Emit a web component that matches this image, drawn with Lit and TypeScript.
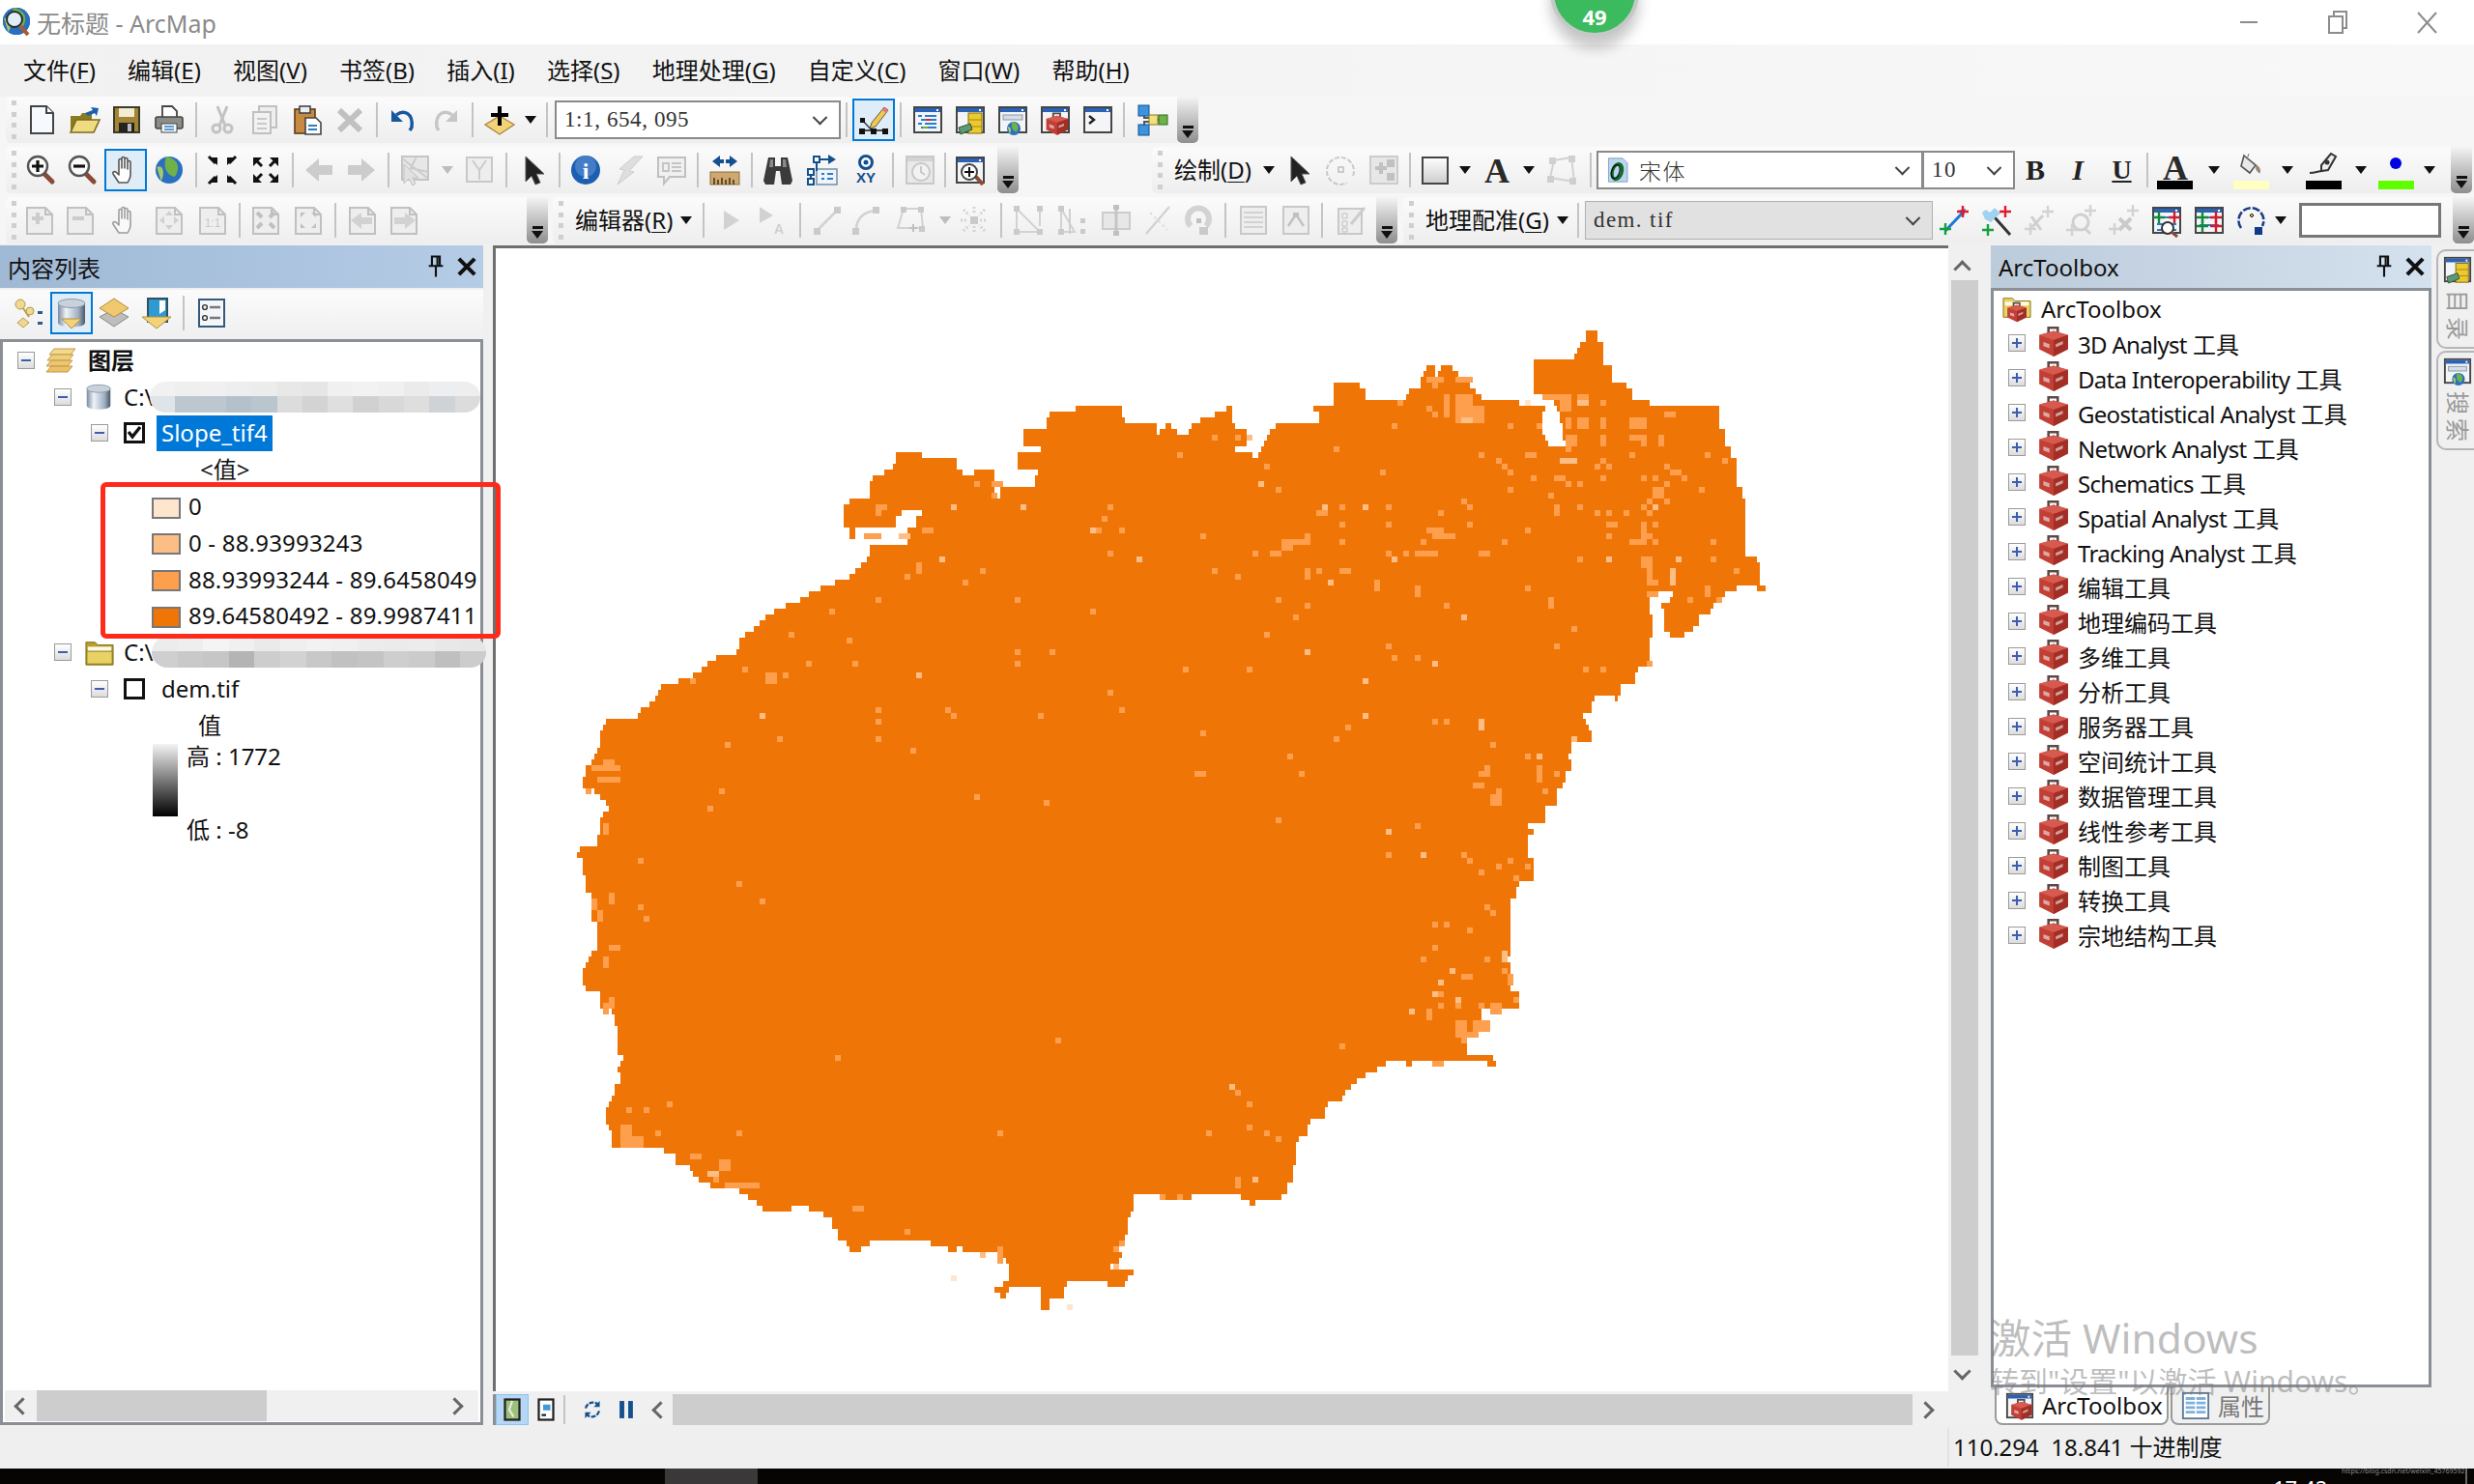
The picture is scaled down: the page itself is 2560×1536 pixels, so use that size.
import { LitElement, html, css, svg, nothing } from "lit";
import { customElement } from "lit/decorators.js";

// ---- icons (32 x 32 box) ----
const win = (inner: unknown) => svg`<rect x="2" y="3" width="28" height="26" fill="#f3f5f7" stroke="#454545" stroke-width="2"/><rect x="3" y="4" width="26" height="4" fill="#2a62b6"/><rect x="25" y="5" width="2" height="2" fill="#fff"/>${inner}`;
const redbox = (x = 0, y = 0, s = 1) => svg`<g transform="translate(${x} ${y}) scale(${s})"><path d="M11 8V3h9v5" fill="none" stroke="#5a4a48" stroke-width="2.4"/><path d="M2 10l14-4 14 4v14l-14 7-14-7z" fill="#c23f35"/><path d="M2 10l14-4 14 4-14 5z" fill="#d65a4f"/><path d="M16 15l14-5v14l-14 7z" fill="#a32e26"/><path d="M6 17l6 2v4l-6-2zM18 19l7-3v3l-7 3z" fill="#eee" opacity=".6"/></g>`;
const glob = (cx: number, cy: number, r: number) => svg`<circle cx=${cx} cy=${cy} r=${r} fill="#2a6fc0"/><path d="M${cx - r * 0.2} ${cy - r}c${r} ${r * 0.2} ${r} ${r} ${r * 0.6} ${r * 1.5}c-${r * 0.6} -${r * 0.1} -${r * 0.9} -${r * 0.8} -${r * 0.6} -${r * 1.5}z" fill="#6fb24a"/><path d="M${cx - r * 0.9} ${cy - r * 0.2}c${r * 0.5} -${r * 0.3} ${r * 0.6} ${r * 0.6} ${r * 0.3} ${r}z" fill="#a5c96a"/>`;
const lens = (sign: string) => svg`<path d="M19 19l9 9" stroke="#8a4a38" stroke-width="5" stroke-linecap="round"/><circle cx="13" cy="12" r="10" fill="#fbfbfb" stroke="#555" stroke-width="2.4"/><path d=${sign} stroke="#111" stroke-width="3.2"/>`;
const fourIn = svg`<path d="M3 3l8 0 0 8zM29 3l-8 0 0 8zM3 29l8 0 0-8zM29 29l-8 0 0-8z" fill="#111"/><path d="M2 2l7 7M30 2l-7 7M2 30l7-7M30 30l-7-7" stroke="#111" stroke-width="3"/>`;
const fourOut = svg`<path d="M3 3h9l-9 9zM29 3h-9l9 9zM3 29h9l-9-9zM29 29h-9l9-9z" fill="#111"/><path d="M5 5l7 7M27 5l-7 7M5 27l7-7M27 27l-7-7" stroke="#111" stroke-width="3"/>`;
const gdoc = (inner: unknown = nothing) => svg`<path d="M3 3h19l7 7v20H3z" fill="#eee" stroke="#bbb" stroke-width="2"/><path d="M22 3v7h7" fill="none" stroke="#bbb" stroke-width="2"/>${inner}`;
const hand = svg`<path d="M9 29l-6-9c-1-2 1-3 3-2l3 3V6c0-2 3-2 3 0v8V4c0-2 3-2 3 0v10V5c0-2 3-2 3 0v10V8c0-2 3-2 3 0v13c0 4-2 6-3 8z" fill="#fff" stroke="#555" stroke-width="1.6" stroke-linejoin="round"/>`;
const pointer = svg`<path d="M8 2v26l6-6 4 9 5-2-4-9h8z" fill="#222" stroke="#555"/>`;
const cross = (x: number, y: number, c: string) => svg`<path d="M${x - 6} ${y}h12M${x} ${y - 6}v12" stroke=${c} stroke-width="2.4"/>`;

const ICONS: Record<string, unknown> = {
  new: svg`<path d="M5 2h16l7 7v21H5z" fill="#f6f9fd" stroke="#444" stroke-width="2"/><path d="M21 2v7h7" fill="#fff" stroke="#444" stroke-width="2"/>`,
  open: svg`<path d="M2 12h10l2-3h10v19H2z" fill="#8a7a20"/><path d="M2 29l6-13h24l-6 13z" fill="#f0dc80" stroke="#7b6a1a" stroke-width="1.6"/><path d="M17 9l8-3-2-3 8 1-2 8-2-3-7 3z" fill="#1c5fa8"/>`,
  save: svg`<rect x="3" y="3" width="26" height="26" fill="#a48432" stroke="#3a3a2a" stroke-width="2"/><rect x="8" y="4" width="16" height="9" fill="#f1ecd4"/><rect x="8" y="19" width="16" height="10" fill="#222"/><rect x="17" y="20" width="4" height="8" fill="#bbb"/>`,
  print: svg`<path d="M9 14V2h10l5 5v7z" fill="#fff" stroke="#444" stroke-width="1.8"/><rect x="2" y="13" width="28" height="12" rx="2" fill="#8d8d88" stroke="#444" stroke-width="1.6"/><rect x="8" y="20" width="16" height="9" fill="#f4f8fb" stroke="#444"/><path d="M11 23h10M11 26h10" stroke="#2c7cc5" stroke-width="1.6"/>`,
  cut: svg`<path d="M11 2l8 20M21 2l-8 20" stroke="#bdbdbd" stroke-width="3"/><circle cx="10" cy="25" r="4" fill="none" stroke="#bdbdbd" stroke-width="3"/><circle cx="22" cy="25" r="4" fill="none" stroke="#bdbdbd" stroke-width="3"/>`,
  copy: svg`<rect x="10" y="2" width="18" height="22" fill="#eee" stroke="#bbb" stroke-width="2"/><rect x="4" y="8" width="18" height="22" fill="#f2f2f2" stroke="#bbb" stroke-width="2"/><path d="M8 15h10M8 20h10M8 25h10" stroke="#c4c4c4" stroke-width="2"/>`,
  paste: svg`<rect x="3" y="5" width="21" height="25" fill="#c78a43" stroke="#5b3b1c" stroke-width="1.6"/><rect x="8" y="2" width="11" height="7" fill="#eee" stroke="#444" stroke-width="1.6"/><path d="M14 14h11l5 5v12H14z" fill="#fff" stroke="#444" stroke-width="1.6"/><path d="M17 22h9M17 26h9" stroke="#2c7cc5" stroke-width="2"/>`,
  del: svg`<path d="M5 6l22 21M27 6L5 27" stroke="#bcbcbc" stroke-width="6"/>`,
  undo: svg`<path d="M9 11c8-6 18-2 16 13l-2 3" fill="none" stroke="#16569e" stroke-width="3.4"/><path d="M4 6v12h12z" fill="#16569e"/>`,
  redo: svg`<path d="M23 11C15 5 5 9 7 24l2 3" fill="none" stroke="#c6c6c6" stroke-width="3.4"/><path d="M28 6v12H16z" fill="#c6c6c6"/>`,
  add: svg`<path d="M16 12l15 9-15 10L1 21z" fill="#f3d27a" stroke="#a88a40" stroke-width="1.4"/><path d="M16 2v20M7 11h18" stroke="#000" stroke-width="4"/>`,
  editor: svg`<path d="M14 19L27 3l4 3-13 17-6 2z" fill="#f2c94c" stroke="#555"/><path d="M27 3l4 3-2 3-4-3z" fill="#e67a6a"/><path d="M4 16l11 12" stroke="#444" stroke-width="1.6"/><path d="M3 27h27" stroke="#222" stroke-width="1.6"/><path d="M2 14h5v5H2zM1 25h6v6H1zM13 25h6v6h-6zM25 25h6v6h-6z" fill="#111"/>`,
  tocwin: win(svg`<path d="M6 12h4M13 12h12M9 16h5M16 16h9M6 20h4M13 20h12M9 24h5M16 24h9" stroke="#2b7cd0" stroke-width="2"/><path d="M14 16h5" stroke="#d62a2a" stroke-width="2"/><path d="M11 24h5" stroke="#6ab42a" stroke-width="2"/>`),
  catalog: win(svg`<rect x="14" y="9" width="14" height="21" fill="#ecc92e" stroke="#80680e"/><path d="M14 16h14M14 23h14" stroke="#a6860f"/><path d="M4 24l12-4 2 6-12 5z" fill="#5b9a72" stroke="#33533e"/>`),
  search: win(svg`<rect x="6" y="11" width="20" height="5" fill="#d5dde6" stroke="#8a97a5"/>${glob(17, 25, 7)}`),
  toolbox: win(redbox(5, 7, 0.8)),
  python: win(svg`<path d="M7 12l5 4-5 4" fill="none" stroke="#222" stroke-width="2.4"/>`),
  model: svg`<path d="M8 8v6h8M8 25v-7h8M18 16h6" stroke="#555" stroke-width="2" fill="none"/><rect x="2" y="1" width="11" height="11" fill="#3d93e0" stroke="#14508e"/><rect x="2" y="21" width="11" height="11" fill="#3d93e0" stroke="#14508e"/><rect x="13" y="11" width="9" height="10" fill="#f0e080" stroke="#8a7a20"/><rect x="23" y="11" width="9" height="10" fill="#6fb24a" stroke="#2f6a22"/>`,
  zoomin: lens("M7 12h12M13 6v12"),
  zoomout: lens("M7 12h12"),
  pan: hand,
  globe: glob(16, 16, 14),
  fixin: fourIn,
  fixout: fourOut,
  back: svg`<path d="M2 16l14-12v7h14v10H16v7z" fill="#c8c8c8"/>`,
  fwd: svg`<path d="M30 16L16 4v7H2v10h14v7z" fill="#c8c8c8"/>`,
  selfeat: svg`<rect x="3" y="2" width="27" height="24" fill="#e6e6e6" stroke="#c0c0c0" stroke-width="2"/><path d="M3 4l26 20M18 2l-6 12 18 4" fill="none" stroke="#c8c8c8" stroke-width="2"/><path d="M5 10v20l5-5 4 7 3-2-3-6h6z" fill="#e0e0e0" stroke="#bbb"/>`,
  clear: svg`<rect x="3" y="3" width="26" height="25" fill="#eee" stroke="#c4c4c4" stroke-width="2"/><path d="M9 6l7 10 7-10M16 16v10" fill="none" stroke="#c8c8c8" stroke-width="2"/>`,
  pointer,
  identify: svg`<circle cx="16" cy="16" r="15" fill="#1c5eb0"/><circle cx="16" cy="12" r="11" fill="#5b93d6" opacity=".6"/><text x="16" y="25" font-family="Liberation Serif" font-weight="700" font-size="24" fill="#fff" text-anchor="middle">i</text>`,
  bolt: svg`<path d="M21 2h9L16 17l5 1-17 13 7-15-5-1z" fill="#dcdcdc" stroke="#c8c8c8"/>`,
  popup: svg`<path d="M2 3h28v20H14l-6 7v-7H2z" fill="#f0f0f0" stroke="#bbb" stroke-width="2"/><path d="M7 9h6v8H7zM16 9h10M16 13h10M16 17h10" fill="none" stroke="#c0c0c0" stroke-width="2"/>`,
  measure: svg`<path d="M3 7l8-6v4h4v4h-4v4zM29 7l-8-6v4h-4v4h4v4z" fill="#14508e"/><rect x="1" y="18" width="30" height="13" fill="#cfa870" stroke="#8e6f3c"/><path d="M5 31v-7M9 31v-5M13 31v-7M17 31v-5M21 31v-7M25 31v-5" stroke="#4a3720" stroke-width="1.6"/>`,
  find: svg`<path d="M6 3h7v9h6V3h7l5 24-2 4H20l-2-14h-4l-2 14H3l-2-4z" fill="#3b3b3b"/><path d="M8 5h3v8H7zM21 5h3l1 8h-4z" fill="#8a8a8a"/>`,
  route: svg`<rect x="10" y="15" width="21" height="16" fill="#eef4fa" stroke="#7a94ad" stroke-width="1.6"/><path d="M15 20h3M21 20h6M15 25h3M21 25h6" stroke="#2c7cc5" stroke-width="2"/><path d="M10 5h12M10 5v12M4 17v10" fill="none" stroke="#14508e" stroke-width="2"/><rect x="7" y="2" width="6" height="6" fill="#fff" stroke="#14508e" stroke-width="2"/><rect x="1" y="15" width="6" height="6" fill="#fff" stroke="#14508e" stroke-width="2"/><rect x="1" y="25" width="6" height="6" fill="#fff" stroke="#14508e" stroke-width="2"/><path d="M22 0l8 5-8 5z" fill="#14508e"/>`,
  xy: svg`<circle cx="16" cy="8" r="6.5" fill="#fff" stroke="#14508e" stroke-width="3"/><circle cx="16" cy="8" r="2.5" fill="#14508e"/><text x="16" y="29" font-family="Liberation Sans" font-weight="700" font-size="15" fill="#14508e" text-anchor="middle">XY</text>`,
  time: svg`<rect x="2" y="2" width="28" height="28" fill="#e8e8e8" stroke="#c4c4c4" stroke-width="2"/><rect x="3" y="3" width="26" height="4" fill="#d0d0d0"/><circle cx="17" cy="18" r="9" fill="#f2f2f2" stroke="#c4c4c4" stroke-width="2"/><path d="M17 12v6l4 3" fill="none" stroke="#c4c4c4" stroke-width="2"/>`,
  viewer: win(svg`<path d="M21 22l8 9" stroke="#8a4a38" stroke-width="4"/><circle cx="15" cy="18" r="8" fill="#fff" stroke="#444" stroke-width="2"/><path d="M10 18h10M15 13v10" stroke="#111" stroke-width="2"/>`),
  rotate: svg`<path d="M28 22a14 14 0 1 0-6 7" fill="none" stroke="#c4c4c4" stroke-width="2" stroke-dasharray="5 2"/><rect x="13" y="13" width="5" height="5" fill="none" stroke="#bbb" stroke-width="1.6"/>`,
  ztool: svg`<rect x="2" y="2" width="28" height="28" fill="#e6e6e6" stroke="#c8c8c8" stroke-width="2"/><rect x="19" y="5" width="8" height="8" fill="#bcbcbc"/><rect x="19" y="19" width="8" height="8" fill="#bcbcbc"/><path d="M7 14h12M13 8v12" stroke="#bcbcbc" stroke-width="4"/>`,
  rect: svg`<defs><linearGradient id="rg" x1="0" y1="0" x2="0" y2="1"><stop offset="0" stop-color="#fff"/><stop offset="1" stop-color="#ccc"/></linearGradient></defs><rect x="3" y="3" width="26" height="27" fill="url(#rg)" stroke="#444" stroke-width="2"/>`,
  bigA: svg`<text x="16" y="29" font-family="Liberation Serif" font-weight="700" font-size="36" fill="#2a2a2a" text-anchor="middle">A</text>`,
  poly: svg`<path d="M4 24L8 6l18-3 3 25z" fill="none" stroke="#cfcfcf" stroke-width="2"/><path d="M3 3h7v7H3zM23 1h7v7h-7zM1 22h7v7H1zM24 24h7v7h-7z" fill="#ccc"/>`,
  link: svg`<path d="M7 27L24 9" stroke="#1a78d8" stroke-width="3"/><path d="M28 4l-8 2 6 6z" fill="#1a78d8"/>${cross(7, 25, "#11a03a")}${cross(25, 7, "#e01c2c")}`,
  wand: svg`<path d="M14 13l16 18" stroke="#333" stroke-width="3"/><path d="M1 8l4-3 4 3 5-5 6 6-5 4-5 5-6-3z" fill="#9fd3f0"/>${cross(7, 26, "#11a03a")}${cross(25, 7, "#e01c2c")}`,
  glink: svg`<path d="M6 26l14-15M8 12l10 14" stroke="#ccc" stroke-width="3"/>${cross(7, 25, "#cfcfcf")}${cross(25, 7, "#cfcfcf")}`,
  glens: svg`<circle cx="15" cy="18" r="8" fill="none" stroke="#ccc" stroke-width="3"/><path d="M20 25l5 5" stroke="#ccc" stroke-width="3"/>${cross(6, 26, "#cfcfcf")}${cross(25, 6, "#cfcfcf")}`,
  gx: svg`<path d="M11 14l12 12M23 14L11 26" stroke="#c6c6c6" stroke-width="4"/>${cross(6, 25, "#cfcfcf")}${cross(25, 6, "#cfcfcf")}`,
  gtbl: win(svg`<path d="M6 13h20M6 20h20M6 26h20" stroke="#2b7cd0" stroke-width="1.8"/>${cross(8, 13, "#118a3a")}${cross(24, 13, "#d21c2c")}<circle cx="17" cy="24" r="6" fill="#fff" stroke="#333" stroke-width="2"/><path d="M21 28l6 5" stroke="#8a4a38" stroke-width="3"/>`),
  gtbl2: win(svg`<path d="M6 13h20M6 21h20" stroke="#2b7cd0" stroke-width="2"/>${cross(9, 13, "#118a3a")}${cross(23, 13, "#d21c2c")}${cross(9, 22, "#118a3a")}${cross(23, 22, "#d21c2c")}`),
  grot: svg`<path d="M5 24A13 13 0 1 1 27 22" fill="none" stroke="#1c3f86" stroke-width="2.6" stroke-dasharray="8 2"/><path d="M14 11l2-2 2 2-2 2z" fill="#e6c82a" stroke="#111"/><rect x="19" y="23" width="8" height="8" fill="#123a86"/>`,
  gz1: gdoc(svg`<path d="M8 14h12M14 8v12" stroke="#c8c8c8" stroke-width="4"/>`),
  gz2: gdoc(svg`<path d="M8 14h12" stroke="#c8c8c8" stroke-width="4"/>`),
  gpan: svg`<g opacity=".55" style="filter:grayscale(1)">${hand}</g>`,
  gfit: gdoc(svg`<path d="M16 6l-4 5h8zM16 26l-4-5h8zM6 16l5-4v8zM26 16l-5-4v8z" fill="#ccc"/>`),
  g11: gdoc(svg`<text x="16" y="23" font-family="Liberation Sans" font-size="12" fill="#c4c4c4" text-anchor="middle">1:1</text>`),
  gin: gdoc(svg`<path d="M7 8l5 5M25 8l-5 5M7 24l5-5M25 24l-5-5" stroke="#bbb" stroke-width="4"/>`),
  gout: gdoc(svg`<path d="M8 8h5l-5 5zM24 8h-5l5 5zM8 24h5l-5-5zM24 24h-5l5-5z" fill="#bbb"/>`),
  gback: gdoc(svg`<path d="M4 16l11-8v5h11v7H15v5z" fill="#cfcfcf"/>`),
  gfwd: gdoc(svg`<path d="M28 16L17 8v5H6v7h11v5z" fill="#cfcfcf"/>`),
  gtri: svg`<path d="M8 6l16 10-16 10z" fill="#cfcfcf"/>`,
  gtria: svg`<path d="M2 2l14 9-14 8z" fill="#cfcfcf"/><text x="22" y="30" font-family="Liberation Sans" font-weight="700" font-size="14" fill="#ccc" text-anchor="middle">A</text>`,
  gline: svg`<path d="M6 26L26 6" stroke="#cfcfcf" stroke-width="2.6"/><rect x="2" y="24" width="7" height="7" fill="#c6c6c6"/><rect x="23" y="2" width="7" height="7" fill="#c6c6c6"/>`,
  gcurve: svg`<path d="M6 26C6 14 14 7 26 6" fill="none" stroke="#cfcfcf" stroke-width="2.6"/><rect x="2" y="24" width="7" height="7" fill="#c6c6c6"/><rect x="23" y="2" width="7" height="7" fill="#c6c6c6"/>`,
  gpoly: svg`<path d="M8 4L2 24h26L26 4z" fill="none" stroke="#cfcfcf" stroke-width="2"/><path d="M5 2h6v6H5zM23 2h6v6h-6zM24 22h6v6h-6z" fill="#c6c6c6"/><path d="M14 24h8M18 20v8" stroke="#bbb" stroke-width="2"/>`,
  gdots: svg`<path d="M2 16h8M22 16h8M16 2v8M16 22v8M5 5l6 6M27 5l-6 6M5 27l6-6M27 27l-6-6" stroke="#d0d0d0" stroke-width="3" stroke-dasharray="2 2"/><rect x="12" y="12" width="8" height="8" fill="#c6c6c6"/>`,
  gsq1: svg`<path d="M4 4l24 24H4zM28 4v18" fill="none" stroke="#cfcfcf" stroke-width="2"/><path d="M1 1h6v6H1zM25 25h6v6h-6zM1 25h6v6H1zM25 1h6v6h-6z" fill="#c6c6c6"/>`,
  gsq2: svg`<path d="M4 4l14 24H4z" fill="none" stroke="#cfcfcf" stroke-width="2"/><path d="M1 1h6v6H1zM1 25h6v6H1zM24 14h5v5h-5zM24 25h5v5h-5z" fill="#c6c6c6"/><path d="M13 4v26" stroke="#ccc" stroke-width="2"/>`,
  gmid: svg`<rect x="2" y="8" width="28" height="17" fill="#e6e6e6" stroke="#c8c8c8" stroke-width="2"/><path d="M16 0v32" stroke="#c0c0c0" stroke-width="3"/><rect x="13" y="0" width="6" height="5" fill="#bbb"/><rect x="13" y="27" width="6" height="5" fill="#bbb"/>`,
  gx2: svg`<path d="M4 30L28 2" stroke="#cfcfcf" stroke-width="2.4"/><path d="M8 8l18 18" stroke="#dcdcdc" stroke-width="2" stroke-dasharray="3 3"/>`,
  ghook: svg`<path d="M8 22A11 11 0 1 1 24 22" fill="none" stroke="#d0d0d0" stroke-width="6"/><rect x="14" y="14" width="5" height="5" fill="#bbb"/><rect x="17" y="23" width="9" height="8" fill="#c6c6c6"/>`,
  gtable: svg`<rect x="3" y="2" width="26" height="28" fill="#eee" stroke="#c4c4c4" stroke-width="2"/><path d="M6 8h20M6 13h20M6 18h20M6 23h20" stroke="#cfcfcf" stroke-width="2"/>`,
  gvert: svg`<rect x="3" y="2" width="26" height="28" fill="#eee" stroke="#c4c4c4" stroke-width="2"/><path d="M8 22l8-12 8 12" fill="none" stroke="#bbb" stroke-width="2.4"/><path d="M13 8h6v5h-6z" fill="#bbb"/>`,
  gcheck: svg`<rect x="3" y="4" width="24" height="26" fill="#eee" stroke="#c4c4c4" stroke-width="2"/><path d="M7 9h5v5H7zM7 17h5v5H7zM7 24h5v4H7z" fill="none" stroke="#bbb"/><path d="M16 20L30 3" stroke="#c8c8c8" stroke-width="3"/>`,
  layers: svg`<path d="M8 4h22l-5 6H3z" fill="#f3d98e" stroke="#c09a48"/><path d="M6 10h22l-5 6H1z" fill="#f0cf7c" stroke="#c09a48"/><path d="M5 16h22l-5 6H0z" fill="#eec670" stroke="#c09a48"/><path d="M5 22h22l-5 6H0z" fill="#ecc066" stroke="#c09a48"/>`,
  db: svg`<defs><linearGradient id="dg"><stop offset="0" stop-color="#7b8ba0"/><stop offset=".3" stop-color="#eef3f8"/><stop offset=".75" stop-color="#9fb0c2"/><stop offset="1" stop-color="#4a5868"/></linearGradient></defs><path d="M2 6v20c0 6 28 6 28 0V6z" fill="url(#dg)"/><ellipse cx="16" cy="6" rx="14" ry="4.5" fill="#c9d2dc" stroke="#8a98a8"/>`,
  folder: svg`<path d="M1 5h10l3 3h17v22H1z" fill="#b89e2a" stroke="#7d6a14"/><rect x="3" y="10" width="26" height="5" fill="#fdfbe8"/><rect x="2" y="15" width="28" height="14" fill="#e8d264" stroke="#8a7618"/>`,
  tbx: redbox(),
  tfolder: svg`<path d="M1 5h10l3 3h17v18H1z" fill="#e8d264" stroke="#8a7618"/><rect x="3" y="9" width="26" height="4" fill="#fdfbe8"/>${redbox(4, 8, 0.75)}`,
  tabtbl: svg`<rect x="2" y="2" width="28" height="28" fill="#fff" stroke="#5f7a96" stroke-width="2"/><path d="M5 8h22M5 13h22M5 18h22M5 23h22" stroke="#7fb0dc" stroke-width="3"/><path d="M16 4v24" stroke="#fff" stroke-width="1.6"/>`,
  fontO: svg`<path d="M3 1h18l6 6v24H3z" fill="#bcd6f2" stroke="#6f93bb"/><ellipse cx="14" cy="18" rx="6" ry="10" transform="rotate(18 14 18)" fill="none" stroke="#0e6e22" stroke-width="4"/><ellipse cx="12" cy="18" rx="5" ry="9" transform="rotate(18 12 18)" fill="none" stroke="#111" stroke-width="1.6"/>`,
  mapv: svg`<rect x="6" y="2" width="20" height="28" fill="#9cc07a" stroke="#222" stroke-width="3"/><path d="M16 4l-4 12 6 10" stroke="#dfeee0" stroke-width="3" fill="none"/>`,
  pagev: svg`<rect x="6" y="2" width="20" height="28" fill="#fff" stroke="#222" stroke-width="3"/><rect x="12" y="9" width="10" height="8" fill="#3f9ad6"/><rect x="10" y="22" width="6" height="3" fill="#222"/>`,
  refresh: svg`<path d="M6 14A11 11 0 0 1 25 9M26 18A11 11 0 0 1 7 23" fill="none" stroke="#14508e" stroke-width="3.4" stroke-dasharray="7 2"/><path d="M27 3v9h-9zM5 29v-9h9z" fill="#14508e"/>`,
  pause: svg`<rect x="6" y="3" width="7" height="26" fill="#14508e"/><rect x="19" y="3" width="7" height="26" fill="#14508e"/>`,
  app: svg`<circle cx="15" cy="15" r="14" fill="#1d4f7c"/>${glob(15, 15, 14)}<circle cx="13" cy="13" r="8" fill="#dfeef8" stroke="#2a2a2a" stroke-width="2"/><path d="M19 20l8 9" stroke="#a85a30" stroke-width="4"/>`,
  pin: svg`<path d="M11 3h10v12h-10zM16 15v14M7 15h18" fill="none" stroke="#111" stroke-width="2.6"/><path d="M18 3v12" stroke="#111" stroke-width="2.6"/>`,
  closex: svg`<path d="M6 6l20 20M26 6L6 26" stroke="#111" stroke-width="5"/>`,
};

const ic = (name: string, size = 32) =>
  html`<svg class="ic" width=${size} height=${size} viewBox="0 0 32 32">${ICONS[name]}</svg>`;

// ---- toolbars ----
type Tok = string | { combo: string; w: number; cls?: string } | { label: string; key: string; after: string; w: number } | { txt: string; w: number; cls: string } | { bar: string; top: string; w: number };

const R1: Tok[] = ["g:15", "new", "open", "save", "print", "|:11", "-cut", "-copy", "paste", "-del", "|:11", "undo", "redo", "|:11", "add:46", "v:18", "|:16",
  { combo: "1:1, 654, 095", w: 296, cls: "scale" }, "|:12", "*editor", "|:12", "tocwin", "catalog", "search", "toolbox", "python", "|:10", "model:48"];
const R2A: Tok[] = ["g:15", "zoomin:41", "zoomout:46", "*pan", "globe:46", "|:10", "fixin", "fixout:45", "|:11", "-back", "-fwd", "|:11", "-selfeat", "-v:23", "-clear", "|:12", "pointer", "|:10", "identify", "-bolt:46", "-popup:42", "|:12", "measure", "|:11", "find", "route:47", "xy", "|:12", "-time", "|:8", "viewer"];
const R2B: Tok[] = ["g:18", { label: "绘制(", key: "D", after: ")", w: 94 }, "v:18", "pointer", "-rotate", "-ztool", "|:9", "rect", "v:18", "bigA:47", "v:20", "-poly:48", "|:12",
  { combo: "宋体", w: 338, cls: "font" }, { combo: "10", w: 96, cls: "size" }, { txt: "B", w: 42, cls: "b" }, { txt: "I", w: 46, cls: "i" }, { txt: "U", w: 45, cls: "u" }, "|:8",
  { bar: "#000", top: "bigA", w: 49 }, "v:32", { bar: "#ffffc0", top: "bucket", w: 44 }, "v:32", { bar: "#000", top: "pen", w: 42 }, "v:36", { bar: "#5fff00", top: "dot", w: 36 }, "v:34"];
const R3A: Tok[] = ["g:15", "-gz1:39", "-gz2:46", "gpan:47", "-gfit", "-g11:46", "|:10", "-gin", "-gout:43", "|:13", "-gback", "-gfwd:42"];
const R3B: Tok[] = ["g:18", { label: "编辑器(", key: "R", after: ")", w: 110 }, "v:20", "|:15", "-gtri", "-gtria:42", "|:13", "-gline", "-gcurve:36", "-gpoly:58", "-v:12", "-gdots:48", "|:8", "-gsq1:47", "-gsq2:46", "-gmid", "-gx2:42", "-ghook:42", "|:13", "-gtable:45", "-gvert", "|:10", "-gcheck:50"];
const R3C: Tok[] = ["g:18", { label: "地理配准(", key: "G", after: ")", w: 138 }, "v:18", "|:14", { combo: "dem. tif", w: 360, cls: "off" }, "link", "wand", "-glink", "-glens", "-gx", "gtbl", "gtbl2", "grot", "v:16"];

const TOP_BARS: Record<string, unknown> = {
  bucket: svg`<path d="M9 4l12 10-6 8-9-7z" fill="#e8e8e8" stroke="#555" stroke-width="1.6"/><path d="M14 2l-2 6M22 14c3 2 4 5 3 8-3-2-4-5-3-8z" fill="#a88a60" stroke="#777"/>`,
  pen: svg`<path d="M14 14L24 2l5 3-8 14-7 1z" fill="#eee" stroke="#333" stroke-width="2"/><circle cx="20" cy="11" r="2.5" fill="#333"/><path d="M2 22c4 0 7-1 12-2" stroke="#333" stroke-width="2" fill="none"/>`,
  dot: svg`<circle cx="16" cy="12" r="6" fill="#0000e0"/>`,
  bigA: ICONS.bigA,
};

// ---- island raster ----
const COAST = [602,812,606,797,622,770,622,754,628,742,660,742,666,732,676,726,686,710,698,706,714,700,730,690,734,684,746,678,766,674,766,662,778,652,788,642,804,630,830,620,846,610,862,604,878,598,894,582,900,572,900,566,916,562,938,562,938,546,948,546,948,534,954,534,954,530,932,530,932,534,926,534,926,546,884,546,884,556,878,556,878,546,874,546,874,524,878,524,878,514,900,514,900,498,906,492,922,486,926,476,926,470,938,466,955,466,954,476,990,476,990,486,1002,492,1012,486,1028,486,1028,514,1034,514,1034,502,1070,502,1070,492,1076,486,1054,486,1054,466,1076,466,1076,460,1060,460,1060,444,1082,444,1082,438,1086,428,1114,428,1114,422,1134,422,1134,418,1150,418,1150,422,1162,422,1162,434,1172,438,1198,438,1198,450,1204,444,1210,434,1214,444,1219,444,1219,450,1230,450,1230,444,1236,438,1242,434,1242,428,1246,434,1258,434,1258,428,1268,428,1268,422,1274,422,1274,434,1278,444,1290,444,1290,460,1278,460,1278,466,1294,466,1300,476,1306,460,1310,454,1316,444,1326,438,1364,438,1364,428,1358,422,1380,422,1380,396,1402,396,1412,402,1412,412,1454,412,1454,406,1470,402,1470,390,1476,380,1486,380,1486,390,1492,380,1502,380,1512,390,1524,402,1534,412,1566,412,1578,422,1598,422,1595,436,1595,446,1604,460,1620,460,1611,422,1604,412,1588,406,1588,374,1598,370,1630,370,1630,364,1636,354,1642,354,1642,342,1652,342,1652,354,1658,354,1658,380,1668,380,1668,396,1678,396,1690,406,1690,412,1700,412,1710,418,1710,422,1764,422,1764,418,1774,418,1780,422,1780,444,1786,444,1786,460,1790,460,1790,476,1796,476,1796,502,1802,502,1802,514,1806,514,1806,578,1818,578,1822,588,1822,604,1828,604,1828,610,1818,610,1818,604,1796,604,1796,610,1786,613,1780,620,1774,626,1770,636,1758,636,1758,646,1748,653,1738,662,1732,662,1722,650,1722,630,1716,626,1731,620,1732,610,1710,610,1706,620,1710,642,1710,662,1706,663,1706,689,1694,693,1690,710,1678,710,1678,716,1674,725,1668,722,1652,722,1646,726,1646,738,1636,742,1642,748,1646,754,1646,770,1626,770,1626,780,1620,785,1626,787,1626,796,1620,796,1620,811,1610,818,1610,834,1598,834,1598,850,1582,850,1578,859,1588,859,1588,866,1582,866,1582,886,1588,886,1588,914,1572,914,1566,933,1562,933,1562,989,1550,989,1562,994,1562,1020,1566,1029,1572,1029,1572,1041,1566,1046,1534,1046,1534,1057,1524,1063,1524,1074,1518,1074,1518,1094,1546,1094,1550,1105,1540,1105,1540,1100,1460,1100,1459,1105,1454,1105,1454,1100,1434,1100,1428,1106,1418,1111,1406,1116,1402,1122,1396,1126,1390,1133,1390,1142,1374,1142,1370,1148,1370,1158,1358,1158,1354,1164,1354,1174,1348,1174,1342,1180,1342,1206,1338,1206,1338,1222,1332,1228,1332,1238,1326,1238,1326,1244,1300,1244,1300,1250,1294,1250,1294,1244,1284,1244,1284,1234,1236,1234,1230,1244,1204,1244,1204,1238,1172,1238,1172,1251,1166,1266,1166,1276,1162,1285,1156,1298,1162,1298,1162,1302,1150,1309,1150,1314,1172,1314,1172,1318,1166,1323,1162,1333,1146,1333,1146,1325,1108,1325,1102,1330,1102,1340,1098,1346,1086,1346,1086,1356,1076,1356,1076,1330,1060,1335,1044,1335,1038,1346,1034,1346,1034,1340,1028,1339,1028,1335,1038,1330,1038,1325,1044,1325,1044,1314,1038,1302,1034,1298,1018,1298,990,1292,990,1298,980,1298,980,1292,964,1292,964,1282,926,1282,926,1286,900,1286,900,1292,890,1292,890,1298,878,1298,878,1292,874,1286,868,1286,868,1271,862,1271,862,1261,852,1261,852,1254,836,1254,836,1250,820,1250,820,1254,788,1254,788,1250,782,1244,772,1238,766,1234,756,1229,734,1227,724,1222,714,1211,714,1206,698,1206,698,1197,686,1197,686,1190,644,1190,634,1185,634,1170,628,1164,628,1148,634,1138,638,1123,644,1116,638,1110,644,1094,638,1094,638,1061,634,1046,622,1046,622,1030,612,1026,602,1020,602,1004,606,998,612,988,618,981,618,955,612,955,612,924,606,924,606,908,602,908,602,886,596,886,596,882,602,876,618,876,618,866,622,866,622,844,628,838,634,834,622,829,618,821,612,818];

const MID: number[][] = [[1252,585],[1280,591],[1351,587,1,2],[1361,585],[1383,585],[1393,585],[1239,553],[1327,555,2,2],[1340,559,3],[1351,550,1,2],[1383,555],[1297,569],[1311,569,2],[1431,569],[1453,567],[1463,569,4],[1478,543,3],[1481,553,4],[1468,559],[1529,569,2],[1553,559],[1575,543],[1520,537],[1431,537],[1388,537],[1364,527,2],[1431,521],[1388,521],[1489,527],[1516,521],[1511,516],[1601,511],[1607,524,1,2],[1633,521],[1649,527],[1662,527],[1681,527],[1703,527],[1697,519],[1703,513],[1712,511],[1724,513],[1760,505],[1711,503,2,2],[1697,492],[1712,492],[1724,495],[1740,489],[1727,483,2],[1724,478],[1655,489],[1649,481],[1655,473],[1660,479],[1609,489,2],[1585,489],[1633,495],[1617,500],[1558,505],[1558,484],[1553,479],[1548,473],[1527,468],[1575,468],[1585,468],[1624,473],[1617,463],[1377,463],[1425,484],[1307,479],[1319,505],[1217,468],[1254,452],[1280,452],[1287,447],[1654,415],[1655,433,1,2],[1655,447],[1655,457],[1687,433,3,2],[1687,452,3],[1713,448,1,2],[1697,457],[1720,425,2],[1783,473],[1761,468],[1687,468],[1629,410,2],[1615,410,2],[1595,409,3],[1615,415,2,2],[1622,447,2,2],[1626,453],[1495,405,1,4],[1508,405,3,2],[1504,420,5,2],[1524,431,2],[1479,398],[1477,392,3],[1504,392,3],[1447,415],[1473,420],[1479,425],[1441,436],[1505,433],[1558,436],[1591,436],[1620,433,1,2],[1629,432,2,2],[1703,587,1,3],[1712,601],[1762,608,1,2],[1745,617],[1777,617],[1702,610,2],[1767,575],[1712,559],[1767,559],[1684,559,3],[1695,575,2,2],[1633,575],[1697,540,1,3],[1662,537,2],[1712,537],[1664,553],[1695,553,2],[1793,585],
[1308,655],[1495,623],[1351,623],[1335,633],[1319,617],[1601,620,1,2],[1575,607],[1462,603,1,2],[1420,599,1,2],[1623,649],[1607,665],[1655,687],[1639,687],[1703,681],[1441,676],[1462,676],[1431,665],[1223,687],[1287,687],[1393,751],[1377,761],[1479,745],[1495,745],[1543,767],[1575,777],[1591,790,1,3],[1537,791,1,2],[1329,777],[1345,799],[1236,799,2],[1527,799],[1607,799],
[1024,495,2],[1009,500],[1025,511],[1148,521],[913,521],[903,519,1,2],[1137,532],[1135,548],[1159,548],[892,553,3],[953,548,2],[1143,569],[945,583,1,2],[1015,585],[935,591],[993,601],[1047,617],[908,617],[855,628],[1127,628],[817,655],[876,660],[1052,671],[1084,671],[833,681],[881,681],[1047,681],[1222,687],[793,695,2,2],[807,697],[768,692],[1148,713],[711,703],[908,729],[976,729],[983,735],[1072,735],[1159,729],[903,745],[903,761],[801,761],[1239,756],[748,767],[940,772],[622,783,2],[614,792,3],[631,792,2],[617,804,4],[1236,799],[743,815],[607,815],[1009,819],
[1079,825],[732,836],[759,911],[785,932],[657,889],[657,937],[663,948],[631,932],[631,921],[614,929,1,2],[615,943,1,2],[625,849,1,2],[628,976,2],[625,988,1,2],[1089,1071],[865,1092],[631,1031,1,2],[625,1040,1,2],[689,1140],[647,1145],[668,1148],[679,1167],[759,1172],[1030,1172],[1249,1172],[644,1166,2,4],[650,1178,3,2],[712,1192,2],[743,1201,2,2],[736,1218],[750,1225,6],[879,1247,2],[935,1273],[1031,1292,1,3],[1158,1284],[1153,1289],[1201,1236],[1217,1236],
[1319,847],[1463,852],[1436,879],[1511,879],[1516,889],[1559,889],[1548,895],[1580,895],[1527,900],[1564,905],[1537,937],[1543,943],[1484,953],[1495,953],[1520,959],[1479,980],[1468,990],[1537,990],[1512,1007,2],[1553,1001],[1559,1009,1,2],[1489,1028],[1539,1037,2,2],[1489,1039],[1505,1039],[1527,1039],[1473,1046,1,2],[1504,1057,2,3],[1521,1053,3,2],[1519,1065,2],[1511,1071],[1383,1081],[1480,1097,2],[1276,1129],[1287,1140],[1292,1161],[1249,1172],[1308,1172],[1319,1177],[1276,1216,1,2],[1568,1033],[1541,824,2,2],[1596,815],[1548,815],[1521,809,2]];
const LIGHT: number[][] = [[1367,521],[1408,521],[1441,575],[1712,521],[1664,575],[1612,473,3],[1287,452],[1303,500],[1630,415,2],[1512,431,2],[1729,588,1,3],[1736,575],[1409,703],[1351,671],[1511,633],[1372,601],[1479,681],[1409,735],[1527,743,1,2],[1623,761],[1591,777],[983,521],[1057,521],[1127,543],[932,553,2],[1175,575],[972,575],[945,697],[785,735],[734,1209,2],[1015,1295],[1153,1305],[1436,857],[1468,879],[1553,981,1,2],[1500,1001],[1486,1012],[1479,1023],[1505,1033],[1457,1044],[1297,1215],[1271,1124]];
const PALE: number[][] = [[983,1321],[1105,1348],[1580,412]];

const G = 6;
function islandPath() {
  let d = "";
  const n = COAST.length / 2;
  for (let y = 342; y < 1358; y += G) {
    const c = y + G / 2;
    const xs: number[] = [];
    for (let i = 0; i < n; i++) {
      const x1 = COAST[i * 2], y1 = COAST[i * 2 + 1];
      const x2 = COAST[(i * 2 + 2) % COAST.length], y2 = COAST[(i * 2 + 3) % COAST.length];
      if (y1 <= c !== y2 <= c) xs.push(x1 + ((c - y1) / (y2 - y1)) * (x2 - x1));
    }
    xs.sort((a, b) => a - b);
    for (let i = 0; i + 1 < xs.length; i += 2) {
      const a = Math.round(xs[i] / 3) * 3, b = Math.round(xs[i + 1] / 3) * 3;
      if (b > a) d += `M${a} ${y}h${b - a}v${G}h${a - b}z`;
    }
  }
  return d;
}
const cellsPath = (list: number[][]) =>
  list.map(([x, y, w = 1, h = 1]) => `M${Math.round(x / G) * G} ${Math.round(y / G) * G}h${w * G}v${h * G}h-${w * G}z`).join("");

const LEGEND: [string, string][] = [
  ["#fee6ce", "0"],
  ["#fdbe85", "0 - 88.93993243"],
  ["#fd9f4d", "88.93993244 - 89.6458049"],
  ["#f07507", "89.64580492 - 89.9987411"],
];
const TOOLS = ["3D Analyst 工具", "Data Interoperability 工具", "Geostatistical Analyst 工具", "Network Analyst 工具", "Schematics 工具", "Spatial Analyst 工具", "Tracking Analyst 工具", "编辑工具", "地理编码工具", "多维工具", "分析工具", "服务器工具", "空间统计工具", "数据管理工具", "线性参考工具", "制图工具", "转换工具", "宗地结构工具"];
const MENUS: [string, string][] = [["文件", "F"], ["编辑", "E"], ["视图", "V"], ["书签", "B"], ["插入", "I"], ["选择", "S"], ["地理处理", "G"], ["自定义", "C"], ["窗口", "W"], ["帮助", "H"]];
const BLUR_A = [["#f1f1f1", "#efefef", "#f0f0f0", "#eeeeee", "#ececec", "#e8e8e8", "#e6e6e6", "#f0f0f0", "#f2f2f2", "#f0f0f0", "#ebebeb", "#eceef0", "#eeeeee"], ["#dfe4e8", "#bcc7cf", "#bcc7cf", "#b5c1ca", "#bac6ce", "#dcdcdc", "#d3d3d3", "#dfdfdf", "#d1d1d1", "#d8d8d8", "#dedede", "#cfd2d6", "#dcdcdc"]];
const BLUR_B = [["#ececec", "#eeeeee", "#f4f4f4", "#f0f0f0", "#eaeaea", "#efefef", "#f2f2f2", "#f0f0f0", "#ececec", "#ebebeb", "#ececec", "#e8e8e8", "#e6e6e6"], ["#cfcfcf", "#c9c9c9", "#c6c6c6", "#b4b4b4", "#cdcdcd", "#d2d2d2", "#c8c8c8", "#c1c1c1", "#c4c4c4", "#cecece", "#cbcbcb", "#bfbfbf", "#cccccc"]];

@customElement("app-root")
class AppRoot extends LitElement {
  static styles = css`
    :host {
      display: block;
      position: relative;
      width: 2560px;
      height: 1536px;
      overflow: hidden;
      background: #f0f0f0;
      font-family: "Noto Sans", "Noto Sans CJK SC", sans-serif;
      font-size: 24px;
      color: #111;
    }
    .ic { display: block; flex: none; overflow: visible; }
    u { text-underline-offset: 3px; text-decoration-thickness: 1px; }

    .title { height: 46px; background: #fff; display: flex; align-items: center; padding-left: 2px; color: #8a8a8a; font-size: 25px; gap: 4px; }
    .caption { margin-left: auto; margin-right: 3px; display: flex; align-items: center; }
    .caption svg { display: block; }
    .caption span { width: 92px; display: flex; justify-content: center; }

    .menu { height: 54px; display: flex; align-items: center; gap: 33.2px; padding-left: 24px; background: linear-gradient(90deg, #f1f1f1, #f8f8f8); line-height: 30px; white-space: nowrap; }

    .rows { background: #f6f6f6; }
    .row { height: 48px; margin-bottom: 4px; display: flex; }
    .row:last-child { margin-bottom: 2px; }
    .seg { display: flex; align-items: center; height: 48px; flex: none; border-radius: 5px 0 0 5px; background: linear-gradient(#fbfbfb, #eeeeee); }
    .s1 { margin-left: 6px; width: 1212px; }
    .s2a { margin-left: 6px; width: 1026px; }
    .s2b { margin-left: 138px; width: 1344px; }
    .s3a { margin-left: 6px; width: 539px; }
    .s3b { margin-left: 5px; width: 852px; }
    .s3c { margin-left: 6px; width: 1086px; }

    .btn { height: 44px; display: flex; align-items: center; justify-content: center; flex: none; box-sizing: border-box; }
    .btn.off .ic { filter: grayscale(1); opacity: 0.9; }
    .btn.on { border: 2px solid #0078d7; background: #dfedf8; }
    .grip { height: 40px; flex: none; box-sizing: border-box; padding-left: 6px; display: flex; flex-direction: column; justify-content: space-between; }
    .grip i { display: block; width: 5px; height: 5px; background: #cfcfcf; }
    .sep { flex: none; height: 36px; display: flex; justify-content: center; }
    .sep i { display: block; width: 2px; background: #c4c4c4; }
    .dd { flex: none; height: 44px; display: flex; align-items: center; justify-content: center; }
    .dd i { display: block; width: 0; height: 0; border: 6px solid transparent; border-top: 8px solid #111; border-bottom: 0; }
    .dd.off i { border-top-color: #bdbdbd; }
    .lbl { flex: none; box-sizing: border-box; padding-left: 5px; white-space: nowrap; line-height: 30px; }
    .combo { flex: none; box-sizing: border-box; height: 40px; border: 2px solid #8a8a8a; background: #fff; display: flex; align-items: center; padding: 0 14px 0 8px; font-family: "Liberation Serif", "Noto Sans CJK SC", serif; color: #333; letter-spacing: 1.4px; font-size: 23px; gap: 8px; }
    .combo.scale { letter-spacing: 0.6px; }
    .combo.off { background: #e1e1e1; border-color: #b0b0b0; border-width: 1px; }
    .combo.size { margin-left: -1px; }
    .combo.font { font-family: "Noto Sans CJK SC", serif; font-weight: 300; }
    .combo em { margin-left: auto; flex: none; width: 9px; height: 9px; border-right: 2px solid #444; border-bottom: 2px solid #444; transform: rotate(45deg) translate(-2px, -2px); }
    .fmt { flex: none; font-family: "Liberation Serif", serif; font-size: 30px; text-align: center; line-height: 44px; color: #222; }
    .fmt.b { font-weight: 700; }
    .fmt.i { font-style: italic; font-weight: 700; }
    .fmt.u { font-weight: 700; text-decoration: underline; font-size: 28px; }
    .barbtn { flex: none; display: flex; flex-direction: column; align-items: center; }
    .barbtn b { display: block; width: 37px; height: 9px; margin-top: -2px; }
    .find { flex: none; box-sizing: border-box; width: 147px; height: 36px; margin-left: 11px; background: #fff; border: 3px solid #777; }
    .chev { flex: none; width: 22px; height: 48px; box-sizing: border-box; padding-bottom: 2px; border-radius: 0 0 5px 5px; background: linear-gradient(#f4f4f4, #8e8e8e); display: flex; flex-direction: column; align-items: center; justify-content: flex-end; }
    .chev s { display: block; width: 11px; height: 3px; background: #111; margin-bottom: 2px; }
    .chev i { display: block; width: 0; height: 0; border: 6px solid transparent; border-top: 8px solid #111; border-bottom: 0; margin-bottom: 3px; }

    .main { height: 1221px; display: flex; }
    .left { width: 500px; flex: none; display: flex; flex-direction: column; position: relative; z-index: 2; }
    .phead { height: 44px; flex: none; display: flex; align-items: center; padding: 0 4px 0 8px; box-sizing: border-box; gap: 6px; }
    .phead .name { flex: 1; font-size: 24px; }
    .left .phead { background: linear-gradient(90deg, #9fb8d4, #b4cce6); }
    .toc { height: 48px; margin: 2px 0 3px; display: flex; align-items: center; padding-left: 8px; background: linear-gradient(#fbfbfb, #f0f0f0); }
    .tree { flex: 1; border: 3px solid #8a8f96; background: #fff; display: flex; flex-direction: column; position: relative; min-height: 0; }
    .rowsbox { flex: 1; }
    .t { height: 37.8px; display: flex; align-items: center; position: relative; white-space: nowrap; line-height: 30px; }
    .l0 { padding-left: 15px; }
    .l1 { padding-left: 53px; }
    .l2 { padding-left: 91px; }
    .exp { width: 18px; height: 18px; flex: none; box-sizing: border-box; border: 1px solid #9a9a9a; background: linear-gradient(#fff, #dcdcdc); position: relative; }
    .exp::before { content: ""; position: absolute; left: 3px; right: 3px; top: 7px; height: 2px; background: #3f5db0; }
    .exp.plus::after { content: ""; position: absolute; top: 3px; bottom: 3px; left: 7px; width: 2px; background: #3f5db0; }
    .t .ti { margin-left: 12px; }
    .t .tx { margin-left: 11px; }
    .chk { width: 22px; height: 22px; flex: none; box-sizing: border-box; border: 3px solid #111; margin-left: 16px; background: #fff; display: flex; }
    .nm { margin-left: 12px; padding: 0 5px; height: 37px; display: flex; align-items: center; }
    .nm.sel { background: #0078d7; color: #fff; }
    .blur { position: absolute; top: 3px; height: 32px; border-radius: 16px; overflow: hidden; display: grid; grid-template-columns: repeat(13, 1fr); grid-template-rows: 15px 17px; }
    .blur.a { left: 152px; width: 342px; }
    .blur.b { left: 154px; width: 346px; }
    .val { padding-left: 204px; }
    .val.dem { padding-left: 202px; }
    .lg { padding-left: 154px; gap: 8px; letter-spacing: 0.2px; }
    .lg i { display: block; box-sizing: border-box; width: 30px; height: 22px; border: 2px solid #777; margin-top: 3px; }
    .ramp { height: 102px; padding-left: 155px; display: flex; gap: 9px; }
    .ramp i { display: block; width: 26px; height: 75px; background: linear-gradient(#f4f4f4, #000); }
    .ramp div { display: flex; flex-direction: column; justify-content: space-between; line-height: 26px; }
    .redbox { position: absolute; left: 101px; top: 145px; width: 414px; height: 162px; box-sizing: border-box; border: 5px solid #ff2a1a; border-radius: 6px; }
    .hs { height: 32px; flex: none; margin: 0 2px 1px; background: #f0f0f0; display: flex; align-items: center; position: relative; }
    .hs .th { position: absolute; background: #cdcdcd; top: 0; bottom: 0; left: 33px; width: 238px; }
    .arr { width: 10px; height: 10px; border-left: 3px solid #666; border-bottom: 3px solid #666; flex: none; }
    .arr.l { transform: rotate(45deg); margin-left: 12px; }
    .arr.r { transform: rotate(225deg); margin-left: auto; margin-right: 18px; }

    .mapcol { width: 1538px; margin-left: 10px; flex: none; display: flex; flex-direction: column; }
    .mapmid { height: 1186px; display: flex; flex: none; }
    .map { width: 1506px; flex: none; box-sizing: border-box; border-top: 3px solid #6e6e6e; border-left: 3px solid #6e6e6e; background: #fff; position: relative; overflow: hidden; }
    .map svg { position: absolute; left: 0; top: 0; }
    .vs { width: 28px; margin-left: 3px; flex: none; background: #f0f0f0; position: relative; }
    .vs .th { position: absolute; left: 0; right: 0; top: 36px; height: 1113px; background: #cdcdcd; }
    .vs .up, .vs .down { position: absolute; left: 5px; width: 10px; height: 10px; border-left: 3px solid #666; border-top: 3px solid #666; }
    .vs .up { top: 18px; transform: rotate(45deg); }
    .vs .down { bottom: 14px; transform: rotate(225deg); }
    .mapbar { height: 32px; margin-top: 3px; width: 1504px; background: #f0f0f0; display: flex; align-items: center; position: relative; border-left: 3px solid #8a8f96; box-sizing: border-box; flex: none; }
    .vb { height: 32px; flex: none; display: flex; align-items: center; justify-content: center; }
    .vb.on { background: #b5d7f3; border: 1px solid #8ec2ec; box-sizing: border-box; }
    .mapbar .sep { height: 30px; }
    .mapbar .th { position: absolute; left: 183px; width: 1283px; top: 0; bottom: 0; background: #cdcdcd; }
    .mapbar .arr.l { margin-left: 10px; }
    .mapbar .arr.r { margin-right: 15px; }

    .right { width: 456px; margin-left: 12px; flex: none; display: flex; flex-direction: column; }
    .right .phead { background: linear-gradient(90deg, #bccbda, #d4e1ef); }
    .rbox { flex: 1; border: 3px solid #8a8f96; background: #fff; min-height: 0; }
    .rt { height: 36.06px; display: flex; align-items: center; white-space: nowrap; padding-left: 15px; }
    .rt .ti { margin: -4px 8px 0 12px; }
    .rt .lat { letter-spacing: -0.7px; }
    .root { padding-left: 9px; }
    .root .ti { margin: 0 10px 0 0; }
    .tabs { height: 39px; flex: none; display: flex; padding-left: 4px; }
    .tab { box-sizing: border-box; height: 39px; border: 2px solid #9a9a9a; border-top: 0; border-radius: 0 0 8px 8px; display: flex; align-items: center; gap: 8px; padding-left: 9px; }
    .tab.a { width: 180px; background: #fff; margin-right: 2px; }
    .tab.b { width: 103px; color: #777; }

    .side { width: 39px; margin-left: 5px; padding-top: 4px; flex: none; display: flex; flex-direction: column; gap: 2px; }
    .stab { height: 103px; box-sizing: border-box; border: 2px solid #b6b6b6; border-right: 0; border-radius: 10px 0 0 10px; padding: 4px 0 0 3px; display: flex; flex-direction: column; align-items: center; gap: 6px; color: #9a9a9a; }
    .stab span { writing-mode: vertical-rl; text-orientation: sideways; white-space: nowrap; line-height: 24px; letter-spacing: 4px; font-size: 24px; }

    .status { height: 45px; display: flex; justify-content: flex-end; align-items: center; background: #efefef; }
    .coords { width: 545px; box-sizing: border-box; height: 40px; border-left: 2px solid #e2e2e2; padding-left: 4px; white-space: pre; line-height: 40px; }
    .taskbar { height: 16px; background: #060504; position: relative; overflow: hidden; }
    .taskbar .tb { position: absolute; left: 688px; top: 0; width: 96px; height: 16px; background: #3a3838; }
    .taskbar .clock { position: absolute; left: 2352px; top: 7px; color: #fff; font-size: 22px; line-height: 26px; }
    .taskbar .csdn { position: absolute; left: 2423px; top: -1px; color: #8d8d8d; font-size: 7px; line-height: 8px; white-space: nowrap; }
    .taskbar .bar { position: absolute; left: 2551px; top: 0; width: 2px; height: 16px; background: #666; }

    .badge { position: absolute; left: 1604px; top: -54px; width: 92px; height: 92px; box-sizing: border-box; border-radius: 50%; background: #3cbb5e; border: 4px solid #c4c8c6; box-shadow: 0 12px 14px rgba(0, 0, 0, 0.22); display: flex; align-items: flex-end; justify-content: center; color: #fff; font-size: 22px; font-weight: 700; line-height: 30px; padding-bottom: 2px; z-index: 3; }
    .wm { position: absolute; left: 2059px; top: 1355px; color: rgba(118, 118, 118, 0.48); pointer-events: none; white-space: nowrap; z-index: 3; }
    .wm div:first-child { font-size: 42.5px; line-height: 60px; }
    .wm div:last-child { font-size: 30px; line-height: 40px; margin-top: -5px; }
  `;

  private token(t: Tok) {
    if (typeof t !== "string") {
      if ("combo" in t) {
        if (t.cls === "font")
          return html`<div class="combo font" style="width:${t.w}px">${ic("fontO", 26)}<span>${t.combo}</span><em></em></div>`;
        return html`<div class="combo ${t.cls ?? ""}" style="width:${t.w}px"><span>${t.combo}</span><em></em></div>`;
      }
      if ("label" in t)
        return html`<div class="lbl" style="width:${t.w}px">${t.label}<u>${t.key}</u>${t.after}</div>`;
      if ("txt" in t) return html`<div class="fmt ${t.cls}" style="width:${t.w}px">${t.txt}</div>`;
      return html`<div class="barbtn" style="width:${t.w}px"><svg class="ic" width="32" height="32" viewBox="0 0 32 32">${TOP_BARS[t.top]}</svg><b style="background:${t.bar}"></b></div>`;
    }
    const [raw, w] = t.split(":");
    const width = w ? Number(w) : 44;
    if (raw === "g") return html`<div class="grip" style="width:${width}px"><i></i><i></i><i></i><i></i></div>`;
    if (raw === "|") return html`<div class="sep" style="width:${width}px"><i></i></div>`;
    if (raw === "v" || raw === "-v") return html`<div class="dd ${raw === "-v" ? "off" : ""}" style="width:${width}px"><i></i></div>`;
    const off = raw.startsWith("-"), on = raw.startsWith("*");
    const name = off || on ? raw.slice(1) : raw;
    return html`<div class="btn ${off ? "off" : ""} ${on ? "on" : ""}" style="width:${width}px">${ic(name)}</div>`;
  }

  private seg(cls: string, toks: Tok[]) {
    return html`<div class="seg ${cls}">${toks.map((t) => this.token(t))}</div>`;
  }

  private chev = html`<div class="chev"><s></s><i></i></div>`;

  private blur(cls: string, rows: string[][]) {
    return html`<div class="blur ${cls}">${rows.flat().map((c) => html`<span style="background:${c}"></span>`)}</div>`;
  }

  private tree() {
    return html`
      <div class="rowsbox">
        <div class="t l0"><span class="exp"></span><span class="ti">${ic("layers")}</span><b class="tx">图层</b></div>
        <div class="t l1"><span class="exp"></span><span class="ti" style="margin-left:14px">${ic("db", 28)}</span><span class="tx" style="margin-left:12px">C:\\</span>${this.blur("a", BLUR_A)}</div>
        <div class="t l2">
          <span class="exp"></span>
          <span class="chk"><svg width="16" height="16" viewBox="0 0 16 16"><path d="M2 7l4 5 8-10" fill="none" stroke="#111" stroke-width="3.4"/></svg></span>
          <span class="nm sel">Slope_tif4</span>
        </div>
        <div class="t val">&lt;值&gt;</div>
        ${LEGEND.map(([c, l]) => html`<div class="t lg"><i style="background:${c}"></i><span>${l}</span></div>`)}
        <div class="t l1"><span class="exp"></span><span class="ti" style="margin-left:14px">${ic("folder", 30)}</span><span class="tx" style="margin-left:10px">C:\\</span>${this.blur("b", BLUR_B)}</div>
        <div class="t l2"><span class="exp"></span><span class="chk"></span><span class="nm">dem.tif</span></div>
        <div class="t val dem">值</div>
        <div class="ramp"><i></i><div><span>高 : 1772</span><span>低 : -8</span></div></div>
      </div>
      <div class="hs"><div class="th"></div><span class="arr l"></span><span class="arr r"></span></div>
      <div class="redbox"></div>
    `;
  }

  private toolLabel(t: string) {
    const i = t.indexOf(" ");
    if (i < 0) return t;
    const j = t.lastIndexOf(" ");
    return html`<span class="lat">${t.slice(0, j)}</span>&nbsp;${t.slice(j + 1)}`;
  }

  render() {
    const w = 1503, h = 1183;
    return html`
      <div class="title">
        ${ic("app", 32)}<span>无标题 - ArcMap</span>
        <div class="caption">
          <span><svg width="22" height="22"><path d="M2 11h18" stroke="#8c8c8c" stroke-width="2"/></svg></span>
          <span><svg width="22" height="26"><path d="M2 7h14v17H2zM7 7V2h13v17h-4" fill="none" stroke="#8c8c8c" stroke-width="2"/></svg></span>
          <span><svg width="24" height="26"><path d="M3 3l19 21M22 3L3 24" stroke="#8c8c8c" stroke-width="2"/></svg></span>
        </div>
      </div>
      <div class="menu">${MENUS.map(([n, k]) => html`<span>${n}(<u>${k}</u>)</span>`)}</div>
      <div class="rows">
        <div class="row">${this.seg("s1", R1)}${this.chev}</div>
        <div class="row">${this.seg("s2a", R2A)}${this.chev}${this.seg("s2b", R2B)}${this.chev}</div>
        <div class="row">
          ${this.seg("s3a", R3A)}${this.chev}${this.seg("s3b", R3B)}${this.chev}
          <div class="seg s3c">${R3C.map((t) => this.token(t))}<div class="find"></div></div>${this.chev}
        </div>
      </div>
      <div class="main">
        <div class="left">
          <div class="phead"><span class="name">内容列表</span>${ic("pin", 26)}${ic("closex", 26)}</div>
          <div class="toc">
            <div class="btn" style="width:44px"><svg class="ic" width="32" height="32" viewBox="0 0 32 32"><path d="M8 8l8 12M8 26h8" stroke="#b89a50" stroke-width="2"/><circle cx="7" cy="7" r="5" fill="#f0d890" stroke="#b89a50"/><circle cx="17" cy="14" r="4" fill="#f0d890" stroke="#b89a50"/><path d="M10 21l6 5-6 5-6-5z" fill="#f0d890" stroke="#b89a50"/><path d="M25 14h5v3h-5zM25 25h5v3h-5z" fill="#2d5a8a"/></svg></div>
            <div class="btn on" style="width:44px"><svg class="ic" width="32" height="32" viewBox="0 0 32 32">${ICONS.db}<path d="M6 22h20L16 32z" fill="#f3d27a" stroke="#b0903c"/></svg></div>
            <div class="btn" style="width:44px"><svg class="ic" width="32" height="32" viewBox="0 0 32 32"><path d="M16 12l15 8-15 10L1 20z" fill="#bdbdbd" stroke="#8a8a8a"/><path d="M16 1l15 10-15 9L1 11z" fill="#f0c870" stroke="#b0903c"/></svg></div>
            <div class="btn" style="width:44px"><svg class="ic" width="32" height="32" viewBox="0 0 32 32"><rect x="7" y="1" width="20" height="24" fill="#2d9ad0" stroke="#33505f" stroke-width="2"/><path d="M19 3h6v10l-6 4z" fill="#fff"/><path d="M1 20h30L16 32z" fill="#f3d27a" stroke="#b0903c"/></svg></div>
            <div class="sep" style="width:12px"><i></i></div>
            <div class="btn" style="width:46px"><svg class="ic" width="32" height="32" viewBox="0 0 32 32"><rect x="3" y="2" width="26" height="28" fill="#f4f7fa" stroke="#36597a" stroke-width="2"/><path d="M14 10h11M14 21h11" stroke="#777" stroke-width="2.4"/><circle cx="9" cy="10" r="2.4" fill="none" stroke="#333" stroke-width="1.4"/><circle cx="9" cy="21" r="2.4" fill="none" stroke="#333" stroke-width="1.4"/></svg></div>
          </div>
          <div class="tree">${this.tree()}</div>
        </div>
        <div class="mapcol">
          <div class="mapmid">
            <div class="map">
              <svg width=${w} height=${h} viewBox="513 257 ${w} ${h}" shape-rendering="crispEdges">
                <path d=${islandPath()} fill="#f07507"/>
                <path d=${cellsPath(MID)} fill="#fd9f4d"/>
                <path d=${cellsPath(LIGHT)} fill="#fdbe85"/>
                <path d=${cellsPath(PALE)} fill="#fee6ce"/>
              </svg>
            </div>
            <div class="vs"><div class="th"></div><span class="up"></span><span class="down"></span></div>
          </div>
          <div class="mapbar">
            <div class="vb on" style="width:34px">${ic("mapv", 24)}</div>
            <div class="vb" style="width:36px">${ic("pagev", 24)}</div>
            <div class="sep" style="width:2px"><i></i></div>
            <div class="vb" style="width:56px">${ic("refresh", 22)}</div>
            <div class="vb" style="width:14px">${ic("pause", 22)}</div>
            <span class="arr l" style="margin-left:22px"></span>
            <div class="th"></div>
            <span class="arr r"></span>
          </div>
        </div>
        <div class="right">
          <div class="phead"><span class="name">ArcToolbox</span>${ic("pin", 26)}${ic("closex", 26)}</div>
          <div class="rbox">
            <div class="rt root"><span class="ti">${ic("tfolder", 30)}</span>ArcToolbox</div>
            ${TOOLS.map((t) => html`<div class="rt"><span class="exp plus"></span><span class="ti">${ic("tbx", 34)}</span><span>${this.toolLabel(t)}</span></div>`)}
          </div>
          <div class="tabs">
            <div class="tab a">${ic("toolbox", 30)}ArcToolbox</div>
            <div class="tab b">${ic("tabtbl", 30)}属性</div>
          </div>
        </div>
        <div class="side">
          <div class="stab">${ic("catalog", 30)}<span>目录</span></div>
          <div class="stab">${ic("search", 30)}<span>搜索</span></div>
        </div>
      </div>
      <div class="status"><div class="coords">110.294  18.841 十进制度</div></div>
      <div class="taskbar">
        <div class="tb"></div>
        <div class="clock">17:42</div>
        <div class="csdn">https://blog.csdn.net/weixin_45769592</div>
        <div class="bar"></div>
      </div>
      <div class="badge">49</div>
      <div class="wm"><div>激活 Windows</div><div>转到"设置"以激活 Windows。</div></div>
    `;
  }
}
